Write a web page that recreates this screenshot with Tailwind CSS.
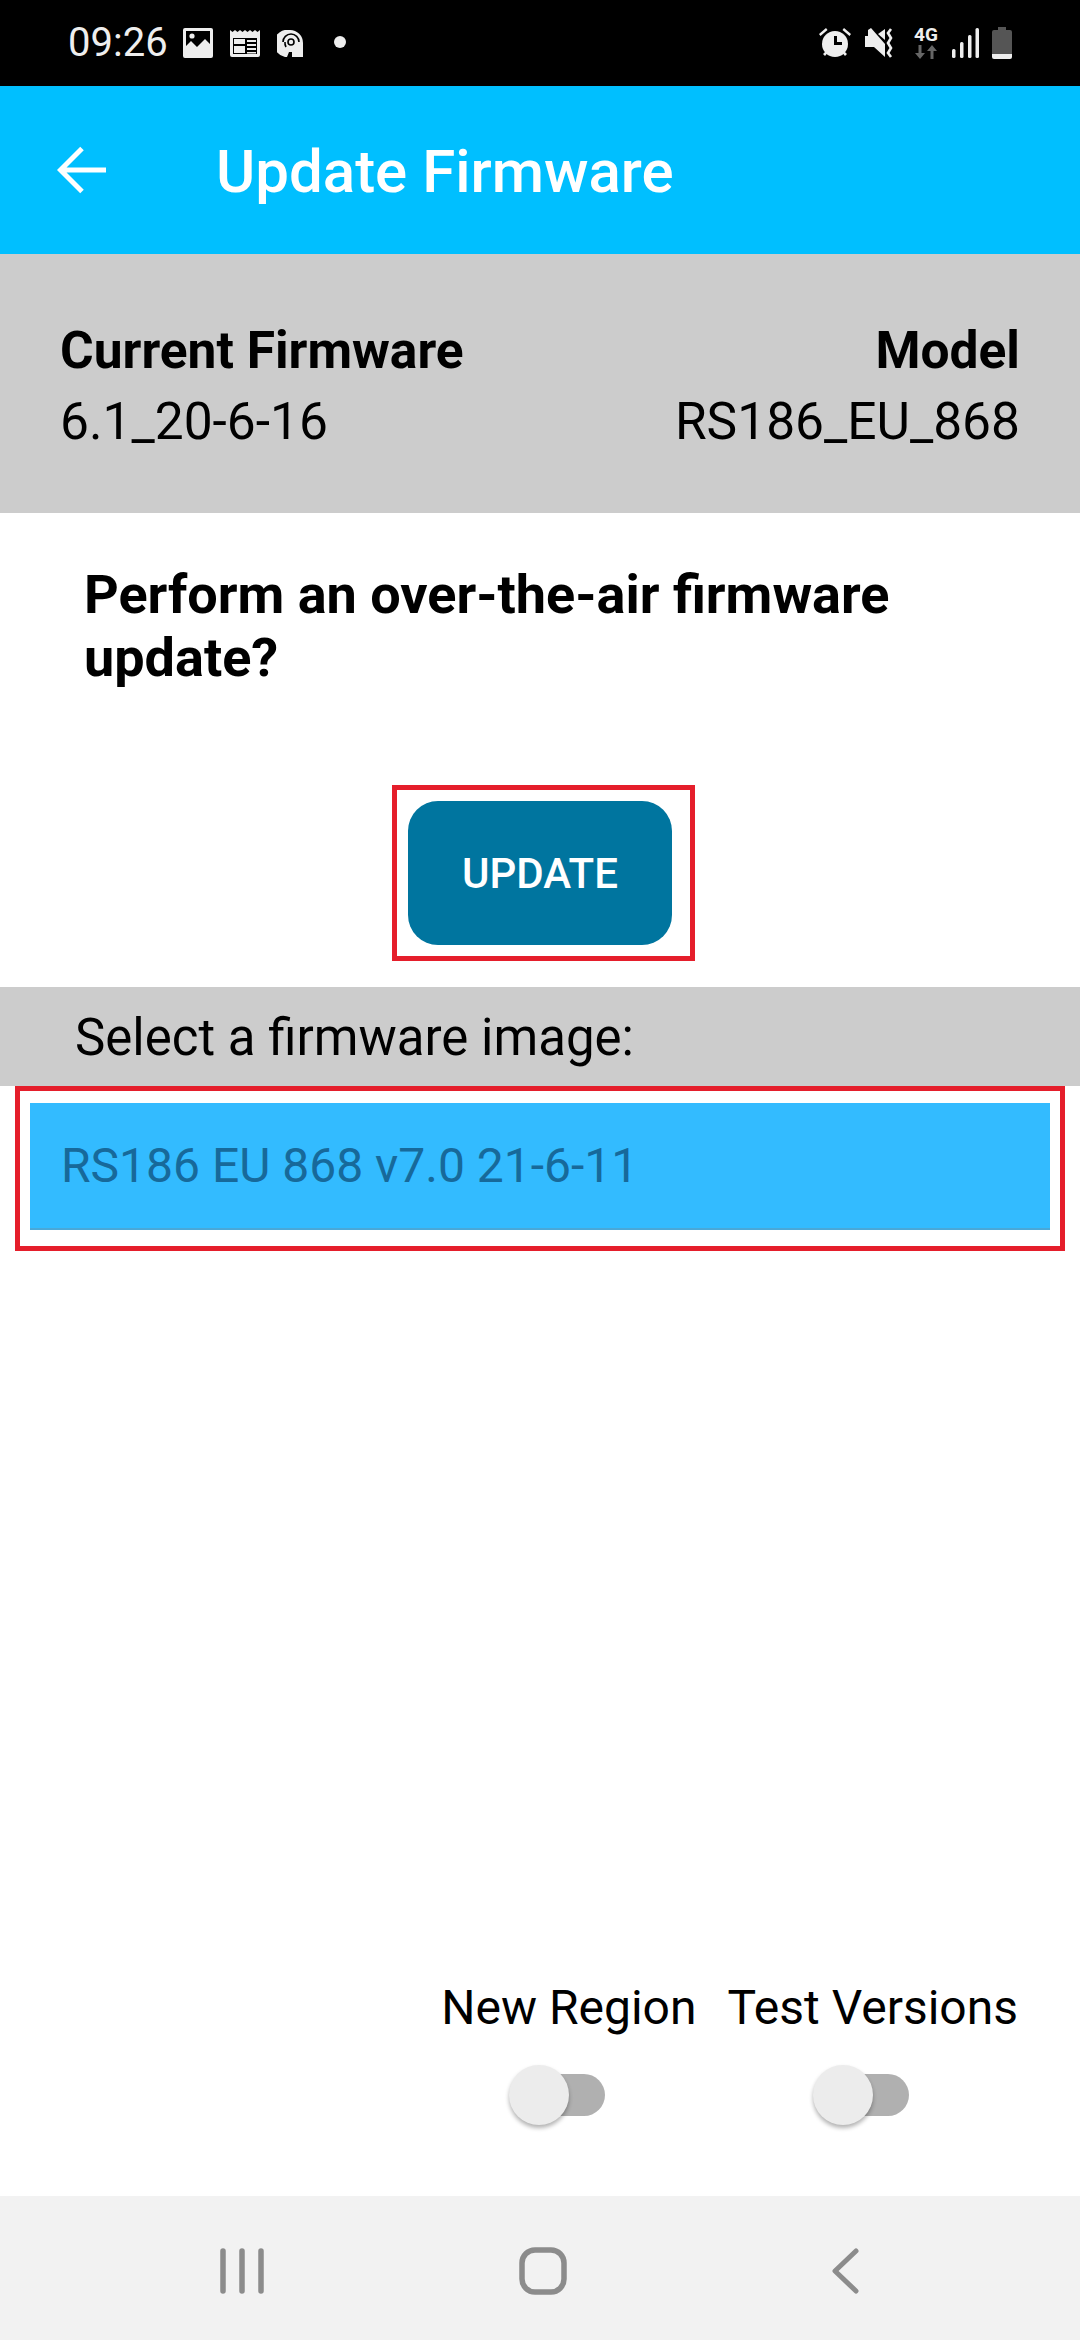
<!DOCTYPE html>
<html lang="en">
<head>
    <meta charset="UTF-8">
    <title>Update Firmware</title>
    <script src="https://cdn.jsdelivr.net/npm/@tailwindcss/browser@4"></script>
</head>
<body class="bg-white font-['Roboto',sans-serif]">
<div class="w-[1080px] h-[2340px] flex flex-col overflow-hidden">
    <!-- Status bar -->
    <div class="h-[86px] bg-black flex items-center pl-[68px] pr-[68px] text-[#eeeeee]">
        <span class="text-[40px] leading-none">09:26</span>
        <svg class="ml-[15px] w-[30px] h-[30px]" viewBox="0 0 30 30"><path fill="#eee" fill-rule="evenodd" d="M2 0h26a2 2 0 0 1 2 2v26a2 2 0 0 1-2 2H2a2 2 0 0 1-2-2V2a2 2 0 0 1 2-2zM3 3v15l5-5 6 6 8-8 5 5V3z"/><circle cx="9" cy="8" r="2.6" fill="#eee"/></svg>
        <svg class="ml-[17px] w-[30px] h-[28px]" viewBox="0 0 30 28"><path fill="#eee" fill-rule="evenodd" d="M0 1l2.500 2L5 1l2.500 2L10 1l2.500 2L15 1l2.500 2L20 1l2.500 2L25 1l2.500 2L30 1v25a2 2 0 0 1-2 2H2a2 2 0 0 1-2-2zM3 9v16h24V9z"/><path fill="#eee" d="M4 10h11v5H4zM17 11h9v2h-9zM17 15h9v2h-9zM17 19h9v2h-9zM17 23h9v1.500h-9zM4 17h11v7H4z"/></svg>
        <svg class="ml-[17px] w-[27px] h-[27px]" viewBox="0 0 27 27"><path fill="#eee" d="M13 0a13 13 0 0 1 13 13v14H15v-5h-3l-2 5H8A13 13 0 0 1 13 0z"/><g fill="none" stroke="#000" stroke-width="1.600"><circle cx="14" cy="12" r="3"/><path d="M6 12a8 8 0 0 1 16 0M9 17a8 8 0 0 1-1-5"/></g></svg>
        <span class="ml-[30px] w-[12px] h-[12px] rounded-full bg-[#eeeeee] -mt-[2px]"></span>
        <div class="flex-1"></div>
        <svg class="w-[34px] h-[32px]" viewBox="0 0 34 32"><g fill="#eee"><circle cx="17" cy="17" r="13"/><path d="M1 7l7-6 1.500 2-7 6zM33 7l-7-6-1.500 2 7 6zM5 27l3-3 2 1.500-3 3.500zM29 27l-3-3-2 1.500 3 3.500z"/></g><path d="M16 9v9h8v-3h-5V9z" fill="#000"/></svg>
        <svg class="ml-[13px] w-[31px] h-[32px]" viewBox="0 0 31 32"><g fill="#eee"><path d="M3 3l3-2 14 16v13L9 20H0V9h3z"/><path d="M20 2v11l-7-6z"/></g><path d="M26 2l-3 4 3 5-3 5 3 5-3 5 3 4" fill="none" stroke="#eee" stroke-width="2.600"/></svg>
        <div class="ml-[18px] w-[24px] flex flex-col items-center">
            <span class="text-[19px] leading-[16px] font-bold text-[#eeeeee]">4G</span>
            <svg class="mt-[2px] w-[22px] h-[14px]" viewBox="0 0 22 14"><path fill="#666" d="M3.500 0h3v8H10l-5 6-5-6h3.500zM15.500 14h3V6H22l-5-6-5 6h3.500z"/></svg>
        </div>
        <svg class="ml-[14px] w-[27px] h-[30px]" viewBox="0 0 27 30"><g fill="#eee"><rect x="0" y="21" width="3.500" height="9" rx="1.500"/><rect x="8" y="14" width="3.500" height="16" rx="1.500"/><rect x="16" y="7" width="3.500" height="23" rx="1.500"/><rect x="23.500" y="0" width="3.500" height="30" rx="1.500"/></g></svg>
        <svg class="ml-[13px] w-[20px] h-[32px]" viewBox="0 0 20 32"><path fill="#555" d="M6 0h8v3h4a2 2 0 0 1 2 2v22H0V5a2 2 0 0 1 2-2h4z"/><path fill="#eee" d="M0 27h20v3a2 2 0 0 1-2 2H2a2 2 0 0 1-2-2z"/></svg>
    </div>

    <!-- App bar -->
    <div class="h-[168px] bg-[#00bfff] flex items-center text-white">
        <svg class="ml-[57px] w-[50px] h-[50px]" viewBox="0 0 50 50"><path d="M49 25H4M25 3.500L3.500 25 25 46.500" fill="none" stroke="#fff" stroke-width="5"/></svg>
        <h1 class="ml-[109px] pt-[4px] text-[60px] font-medium leading-none">Update Firmware</h1>
    </div>

    <!-- Current firmware / model -->
    <div class="h-[259px] bg-[#cccccc] flex justify-between items-center px-[60px] pt-[4px] text-black text-[51.500px] leading-[71px]">
        <div>
            <div class="font-bold">Current Firmware</div>
            <div>6.1_20-6-16</div>
        </div>
        <div class="text-right">
            <div class="font-bold">Model</div>
            <div>RS186_EU_868</div>
        </div>
    </div>

    <!-- Update prompt -->
    <p class="mt-[50px] px-[84px] text-[54px] leading-[63px] font-bold text-black">Perform an over-the-air firmware update?</p>
    <div class="mt-[96px] pl-[392px]">
        <div class="w-[303px] h-[176px] border-[5px] border-[#e51e2b] flex items-center pl-[11px]">
            <button class="w-[264px] h-[144px] rounded-[30px] bg-[#00759f] text-white text-[42px] font-medium">UPDATE</button>
        </div>
    </div>

    <!-- Image list -->
    <div class="mt-[26px] h-[99px] bg-[#cccccc] flex items-center pl-[75px] pt-[4px] text-[51px] text-black">Select a firmware image:</div>
    <div class="mx-[15px] h-[165px] border-[5px] border-[#e51e2b] flex items-center px-[10px] pb-[4px]">
        <div class="w-full h-[127px] bg-[#33bbff] border-b-[2px] border-[#4aa8d8] flex items-center pl-[31px] text-[48px] text-[#17699a]">RS186 EU 868 v7.0 21-6-11</div>
    </div>

    <div class="flex-1"></div>

    <!-- Toggles -->
    <div class="flex justify-end gap-[31px] pr-[62px] text-[48px] leading-[54px] text-black">
        <div class="flex flex-col items-center">
            <span>New Region</span>
            <div class="relative mt-[30px] mr-[24px] w-[96px] h-[60px] flex items-center justify-end">
                <div class="w-[84px] h-[42px] rounded-full bg-[#b0b0b0]"></div>
                <div class="absolute left-0 top-0 w-[60px] h-[60px] rounded-full bg-[#ececec] shadow-[0_3px_4px_rgba(0,0,0,0.3)]"></div>
            </div>
        </div>
        <div class="flex flex-col items-center">
            <span>Test Versions</span>
            <div class="relative mt-[30px] mr-[24px] w-[96px] h-[60px] flex items-center justify-end">
                <div class="w-[84px] h-[42px] rounded-full bg-[#b0b0b0]"></div>
                <div class="absolute left-0 top-0 w-[60px] h-[60px] rounded-full bg-[#ececec] shadow-[0_3px_4px_rgba(0,0,0,0.3)]"></div>
            </div>
        </div>
    </div>

    <!-- Nav bar -->
    <div class="mt-[71px] h-[144px] bg-[#f2f2f2] flex items-center pt-[6px]">
        <svg class="ml-[220px] w-[44px] h-[46px]" viewBox="0 0 44 46"><path d="M3 3v40M22 3v40M41 3v40" stroke="#8c8c8c" stroke-width="5.500" stroke-linecap="round"/></svg>
        <svg class="ml-[255px] w-[48px] h-[48px]" viewBox="0 0 48 48"><rect x="3" y="3" width="42" height="42" rx="13" fill="none" stroke="#8c8c8c" stroke-width="5.500"/></svg>
        <svg class="ml-[265px] w-[27px] h-[46px]" viewBox="0 0 27 46"><path d="M24 3L3 23l21 20" fill="none" stroke="#8c8c8c" stroke-width="5" stroke-linecap="round" stroke-linejoin="round"/></svg>
    </div>
</div>
</body>
</html>
